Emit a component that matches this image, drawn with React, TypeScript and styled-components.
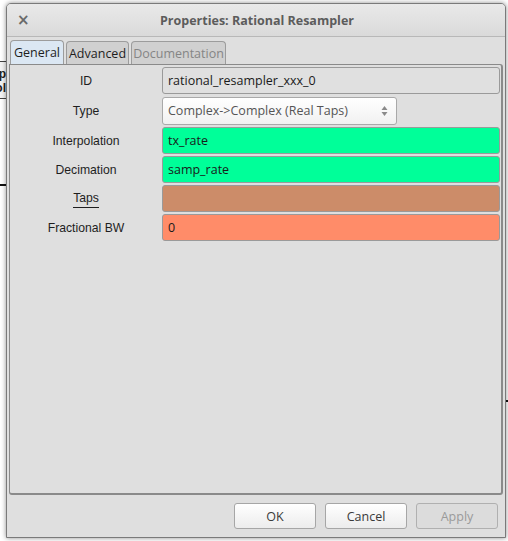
import React from "react";
import styled, { createGlobalStyle } from "styled-components";

const Global = createGlobalStyle`
  html, body { margin: 0; padding: 0; background: #ffffff; }
  body { width: 508px; height: 541px; overflow: hidden; font-family: "Open Sans", "DejaVu Sans", sans-serif; }
`;

const Desktop = styled.div`
  position: relative;
  width: 508px;
  height: 541px;
  background: #ffffff;
  overflow: hidden;
`;

const BehindBlock = styled.div`
  position: absolute;
  left: -22px;
  top: 61px;
  width: 28px;
  height: 38px;
  border-top: 1px solid #444;
  border-bottom: 1px solid #444;
  background: #f4f4f4;
  font-family: "Liberation Sans", Arial, sans-serif;
  font-weight: bold;
  font-size: 12px;
  line-height: 14px;
  color: #222;
  text-align: right;
  padding-top: 5px;
  box-sizing: border-box;
`;

const BehindLine = styled.div<{ $top: number; $left: number }>`
  position: absolute;
  left: ${(p) => p.$left}px;
  top: ${(p) => p.$top}px;
  width: 8px;
  height: 2px;
  background: #111;
`;

const Window = styled.div`
  position: absolute;
  left: 6px;
  top: 3px;
  width: 500px;
  height: 535px;
  box-sizing: border-box;
  border: 1px solid #7a7a7a;
  border-radius: 5px 5px 0 0;
  background: #dfdfdf;
  box-shadow: 0 0 5px rgba(0, 0, 0, 0.45);
  display: flex;
  flex-direction: column;
  overflow: hidden;
`;

const TitleBar = styled.div`
  height: 32px;
  flex: none;
  display: flex;
  align-items: center;
  position: relative;
  background: linear-gradient(#e9e9e9, #dadada);
  border-bottom: 1px solid #b8b8b8;
`;

const CloseGlyph = styled.span`
  position: absolute;
  left: 10px;
  top: 7px;
  font-family: "DejaVu Sans", sans-serif;
  font-size: 15px;
  font-weight: bold;
  color: #6a6a6a;
`;

const Title = styled.div`
  flex: 1;
  text-align: center;
  font-family: "Open Sans", sans-serif;
  font-weight: bold;
  font-size: 12.5px;
  color: #5c5c5c;
  padding-left: 2px;
`;

const Body = styled.div`
  flex: 1;
  display: flex;
  flex-direction: column;
  padding: 3px 2px 0 2px;
`;

const TabStrip = styled.div`
  display: flex;
  align-items: flex-end;
  gap: 2px;
  padding-left: 1px;
  height: 24px;
`;

const Tab = styled.div<{ $active?: boolean; $disabled?: boolean; $w: number }>`
  width: ${(p) => p.$w}px;
  box-sizing: border-box;
  height: ${(p) => (p.$active ? 24 : 23)}px;
  border: 1px solid #9c9c9c;
  border-bottom: none;
  border-radius: 4px 4px 0 0;
  background: ${(p) => (p.$active ? "#dbe7f3" : "#d0d0d0")};
  font-family: "Open Sans", sans-serif;
  font-size: 12.5px;
  color: ${(p) => (p.$disabled ? "#858585" : "#1e1e1e")};
  display: flex;
  align-items: center;
  justify-content: center;
  white-space: nowrap;
`;

const Pane = styled.div`
  height: 431px;
  box-sizing: border-box;
  border: 1px solid #8a8a8a;
  border-right-width: 2px;
  border-bottom-width: 2px;
  border-radius: 0 3px 3px 3px;
  padding: 2px 1px 0 0;
`;

const Grid = styled.div`
  display: grid;
  grid-template-columns: 152px 1fr;
  row-gap: 2px;
`;

const Label = styled.div<{ $h?: number }>`
  height: ${(p) => p.$h ?? 27}px;
  display: flex;
  align-items: center;
  justify-content: center;
  font-family: "Liberation Sans", Arial, sans-serif;
  font-size: 12.2px;
  color: #1e1e1e;
`;

const Underlined = styled.span`
  border-bottom: 1px solid #1e1e1e;
  line-height: 15px;
  padding-bottom: 1px;
  margin-top: 2px;
`;

const Field = styled.div<{ $bg: string }>`
  height: 27px;
  box-sizing: border-box;
  border: 1px solid #9a9a9a;
  border-radius: 3px;
  background: ${(p) => p.$bg};
  display: flex;
  align-items: center;
  padding-left: 5px;
  font-family: "Open Sans", sans-serif;
  font-size: 12.5px;
  color: #1a1a1a;
`;

const ComboRow = styled.div`
  height: 29px;
  display: flex;
  align-items: center;
`;

const Combo = styled.div`
  width: 235px;
  height: 28px;
  box-sizing: border-box;
  border: 1px solid #a9a9a9;
  border-radius: 3px;
  background: linear-gradient(#ffffff, #f1f1f1);
  display: flex;
  align-items: center;
  justify-content: space-between;
  padding: 0 8px 0 5px;
  font-family: "Open Sans", sans-serif;
  font-size: 12.5px;
  color: #555;
`;

const Buttons = styled.div`
  flex: 1;
  display: flex;
  justify-content: flex-end;
  align-items: flex-start;
  gap: 9px;
  padding: 8px 5px 0 0;
`;

const Button = styled.div<{ $disabled?: boolean }>`
  width: 82px;
  height: 26px;
  box-sizing: border-box;
  border: 1px solid ${(p) => (p.$disabled ? "#b0b0b0" : "#a6a6a6")};
  border-radius: 3px;
  background: ${(p) => (p.$disabled ? "#dcdcdc" : "linear-gradient(#ffffff, #ececec)")};
  display: flex;
  align-items: center;
  justify-content: center;
  font-family: "Open Sans", sans-serif;
  font-size: 12.5px;
  color: ${(p) => (p.$disabled ? "#9a9a9a" : "#3a3a3a")};
`;

const Arrows = () => (
  <svg width="7" height="12" viewBox="0 0 7 12">
    <path d="M3.5 1 L6.5 5 L0.5 5 Z" fill="#8a8a8a" />
    <path d="M3.5 11 L6.5 7 L0.5 7 Z" fill="#8a8a8a" />
  </svg>
);

export default function App() {
  return (
    <Desktop>
      <Global />
      <BehindBlock>
        ep
        <br />
        ol
      </BehindBlock>
      <BehindLine $top={184} $left={-2} />
      <BehindLine $top={400} $left={505} />
      <Window>
        <TitleBar>
          <CloseGlyph>×</CloseGlyph>
          <Title>Properties: Rational Resampler</Title>
        </TitleBar>
        <Body>
          <TabStrip>
            <Tab $active $w={54}>General</Tab>
            <Tab $w={63}>Advanced</Tab>
            <Tab $disabled $w={95}>Documentation</Tab>
          </TabStrip>
          <Pane>
            <Grid>
              <Label>ID</Label>
              <Field $bg="#e0e0e0">rational_resampler_xxx_0</Field>
              <Label $h={29}>Type</Label>
              <ComboRow>
                <Combo>
                  <span>Complex-&gt;Complex (Real Taps)</span>
                  <Arrows />
                </Combo>
              </ComboRow>
              <Label>Interpolation</Label>
              <Field $bg="#00ff99">tx_rate</Field>
              <Label>Decimation</Label>
              <Field $bg="#00ff99">samp_rate</Field>
              <Label>
                <Underlined>Taps</Underlined>
              </Label>
              <Field $bg="#cc8c69" />
              <Label>Fractional BW</Label>
              <Field $bg="#ff8c69">0</Field>
            </Grid>
          </Pane>
          <Buttons>
            <Button>OK</Button>
            <Button>Cancel</Button>
            <Button $disabled>Apply</Button>
          </Buttons>
        </Body>
      </Window>
    </Desktop>
  );
}
